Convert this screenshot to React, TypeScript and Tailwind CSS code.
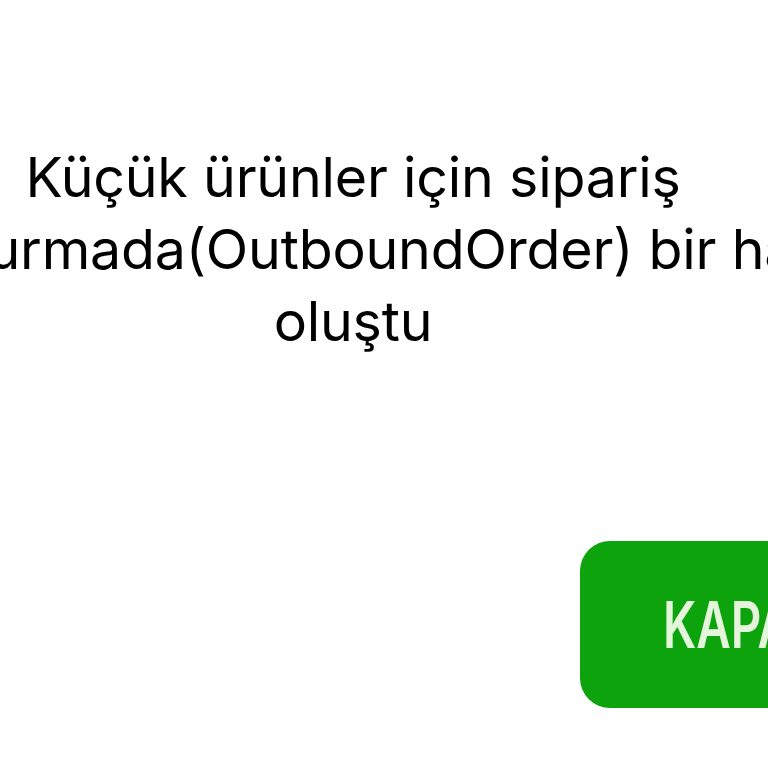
export default function App() {
  return (
    <div className="w-[768px] h-[768px] overflow-hidden bg-white" style={{ fontFamily: "Inter, 'Liberation Sans', sans-serif" }}>
      <div className="flex flex-col">
        {/* message, centred on the dialog which is wider than the crop */}
        <div className="w-[706px] flex justify-center pt-[141px]">
          <p className="w-[1010px] shrink-0 text-center text-[55.5px] leading-[72px] text-black tracking-[-0.2px]">
            Küçük ürünler için sipariş oluşturmada(OutboundOrder) bir hata oluştu
          </p>
        </div>

        <div className="flex pl-[580px] pt-[184px]">
          <button className="shrink-0 w-[340px] h-[167px] rounded-[30px] bg-[#0ca30c] text-[#e4f5dc] text-left pl-[83px] text-[64px] font-semibold">
            <span className="inline-block origin-left scale-x-[0.74]">KAPAT</span>
          </button>
        </div>
      </div>
    </div>
  );
}
